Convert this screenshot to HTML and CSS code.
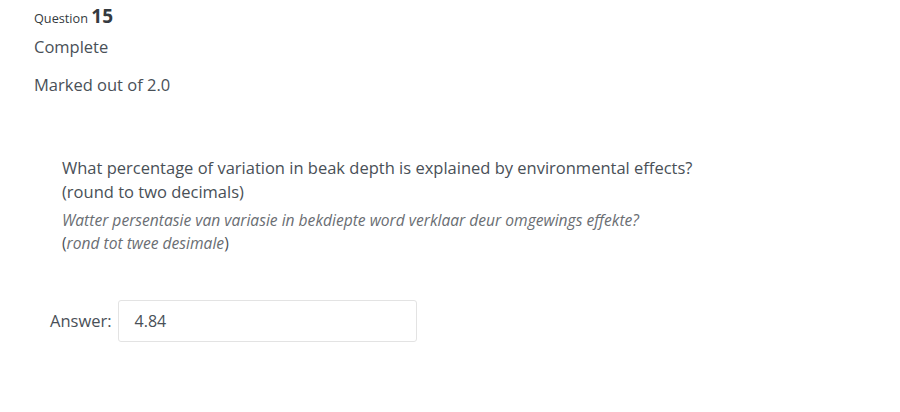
FILE: index.html
```html
<!DOCTYPE html>
<html>
<head>
<meta charset="utf-8">
<link rel="stylesheet" href="styles.css">
</head>
<body>
<div class="que">
  <div class="info">
    <h3 class="no">Question <span class="qno">15</span></h3>
    <div class="state">Complete</div>
    <div class="grade">Marked out of 2.0</div>
  </div>
  <div class="content">
    <div class="qtext">
      <p class="en">What percentage of variation in beak depth is explained by environmental effects?<br>(round to two decimals)</p>
      <p class="af"><em>Watter persentasie van variasie in bekdiepte word verklaar deur omgewings effekte?</em><br>(<em>rond tot twee desimale</em>)</p>
    </div>
    <div class="ablock">
      <label class="alabel">Answer:</label>
      <div class="answer">4.84</div>
    </div>
  </div>
</div>
</body>
</html>
```
FILE: styles.css
```css
html, body {
  margin: 0;
  padding: 0;
  background: #fff;
}
body {
  font-family: "Open Sans", "Liberation Sans", sans-serif;
  color: #495057;
  font-size: 16.5px;
}
.que {
  padding: 3px 0 0 34px;
}
.info {
  display: flex;
  flex-direction: column;
}
.no {
  margin: 0;
  font-size: 12.7px;
  font-weight: 400;
  color: #343a40;
  line-height: 26px;
}
.qno {
  font-size: 19px;
  font-weight: 700;
}
.state {
  margin-top: 5px;
  line-height: 22px;
}
.grade {
  margin-top: 16px;
  line-height: 22px;
}
.content {
  padding: 60px 0 0 28px;
}
.qtext p {
  margin: 0;
}
.qtext .en {
  line-height: 24px;
}
.qtext .af {
  margin-top: 4.5px;
  font-size: 15.6px;
  line-height: 23px;
}
.qtext em {
  color: #6a6e73;
}
.ablock {
  display: flex;
  align-items: center;
  margin: 45px 0 0 -12px;
  gap: 6px;
}
.answer {
  width: 299px;
  height: 42px;
  box-sizing: border-box;
  border: 1px solid #e3e3e3;
  border-radius: 3px;
  padding: 0 16px;
  line-height: 40px;
  font-size: 16px;
}
```
